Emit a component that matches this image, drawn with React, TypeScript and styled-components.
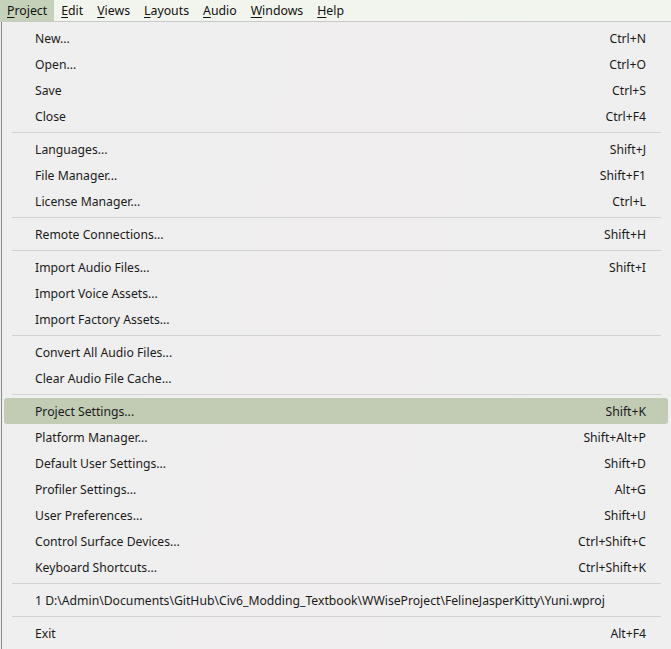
import styled, { createGlobalStyle } from 'styled-components';

const GlobalStyle = createGlobalStyle`
  html, body {
    margin: 0;
    padding: 0;
    background: #efefef;
  }
  body {
    font-family: 'Noto Sans', 'Liberation Sans', sans-serif;
    font-size: 12.2px;
    color: #1a1a1a;
  }
`;

const Page = styled.div`
  width: 671px;
  height: 649px;
  overflow: hidden;
  display: flex;
  flex-direction: column;
  background: #efefef;
`;

const MenuBar = styled.div`
  display: flex;
  height: 22px;
  background: #f1f5ed;
  border-bottom: 1px solid #c9c9c9;
  box-sizing: border-box;
`;

const BarItem = styled.div<{ $active?: boolean }>`
  display: flex;
  align-items: center;
  padding: 0 7px;
  font-size: 12.3px;
  background: ${(p) => (p.$active ? '#c6d1ba' : 'transparent')};
  color: #111;
`;

const Key = styled.span`
  text-decoration: underline;
  text-underline-offset: 2px;
`;

const Dropdown = styled.div`
  flex: 1;
  display: flex;
  flex-direction: column;
  padding: 3px 3px 0 2px;
  margin-left: 1px;
  border-left: 1px solid #8a8a8a;
  background: linear-gradient(100deg, #efefef 0%, #f0eeee 50%, #efefef 100%);
`;

const Row = styled.div<{ $selected?: boolean }>`
  display: flex;
  align-items: center;
  justify-content: space-between;
  height: 26px;
  padding: 0 22px 0 31px;
  border-radius: 3px;
  background: ${(p) => (p.$selected ? '#c2ccb4' : 'transparent')};
  white-space: nowrap;
`;

const Label = styled.span``;

const Shortcut = styled.span`
  color: #1a1a1a;
`;

const Separator = styled.div`
  height: 1px;
  margin: 3px 7px 3px 8px;
  background: #d2d2d2;
`;

type Entry = { label: string; key?: string; selected?: boolean } | 'sep';

const entries: Entry[] = [
  { label: 'New...', key: 'Ctrl+N' },
  { label: 'Open...', key: 'Ctrl+O' },
  { label: 'Save', key: 'Ctrl+S' },
  { label: 'Close', key: 'Ctrl+F4' },
  'sep',
  { label: 'Languages...', key: 'Shift+J' },
  { label: 'File Manager...', key: 'Shift+F1' },
  { label: 'License Manager...', key: 'Ctrl+L' },
  'sep',
  { label: 'Remote Connections...', key: 'Shift+H' },
  'sep',
  { label: 'Import Audio Files...', key: 'Shift+I' },
  { label: 'Import Voice Assets...' },
  { label: 'Import Factory Assets...' },
  'sep',
  { label: 'Convert All Audio Files...' },
  { label: 'Clear Audio File Cache...' },
  'sep',
  { label: 'Project Settings...', key: 'Shift+K', selected: true },
  { label: 'Platform Manager...', key: 'Shift+Alt+P' },
  { label: 'Default User Settings...', key: 'Shift+D' },
  { label: 'Profiler Settings...', key: 'Alt+G' },
  { label: 'User Preferences...', key: 'Shift+U' },
  { label: 'Control Surface Devices...', key: 'Ctrl+Shift+C' },
  { label: 'Keyboard Shortcuts...', key: 'Ctrl+Shift+K' },
  'sep',
  { label: '1 D:\\Admin\\Documents\\GitHub\\Civ6_Modding_Textbook\\WWiseProject\\FelineJasperKitty\\Yuni.wproj' },
  'sep',
  { label: 'Exit', key: 'Alt+F4' },
];

const menus = ['Project', 'Edit', 'Views', 'Layouts', 'Audio', 'Windows', 'Help'];

export default function App() {
  return (
    <Page>
      <GlobalStyle />
      <MenuBar>
        {menus.map((m, i) => (
          <BarItem key={m} $active={i === 0}>
            <Key>{m[0]}</Key>
            {m.slice(1)}
          </BarItem>
        ))}
      </MenuBar>
      <Dropdown>
        {entries.map((e, i) =>
          e === 'sep' ? (
            <Separator key={i} />
          ) : (
            <Row key={i} $selected={e.selected}>
              <Label>{e.label}</Label>
              {e.key && <Shortcut>{e.key}</Shortcut>}
            </Row>
          )
        )}
      </Dropdown>
    </Page>
  );
}
